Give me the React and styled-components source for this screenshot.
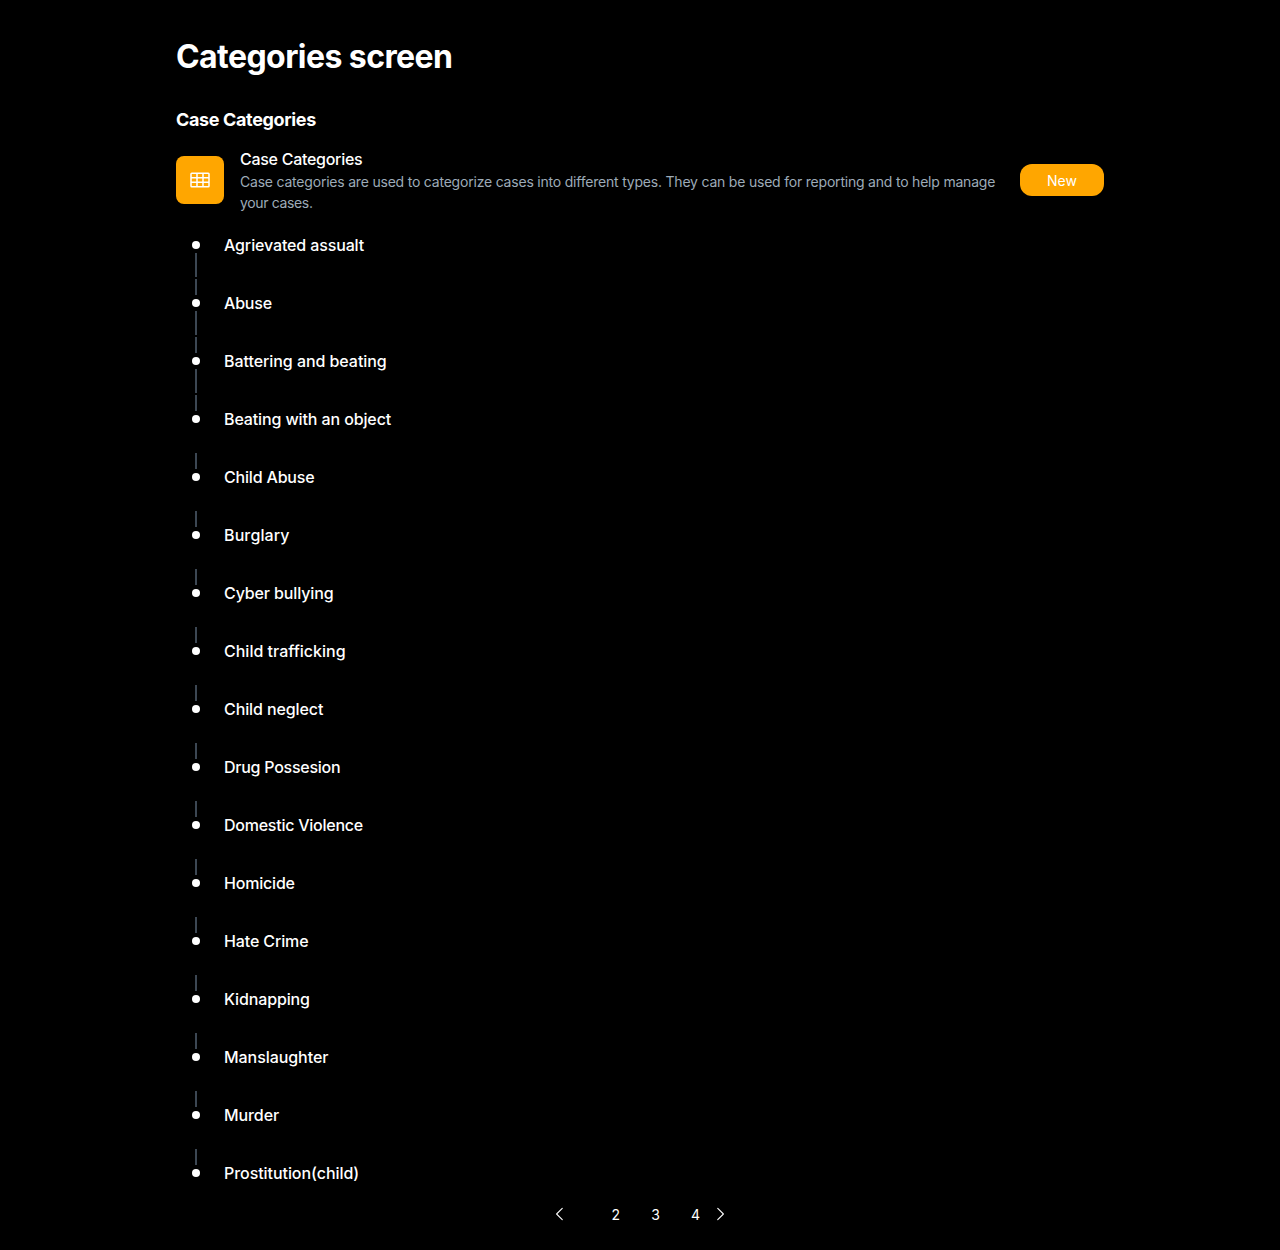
import React from "react";
import styled, { createGlobalStyle } from "styled-components";
import { PiGridNine, PiCaretLeft, PiCaretRight } from "react-icons/pi";

const GlobalStyle = createGlobalStyle`
  *, *::before, *::after { box-sizing: border-box; }
  body { margin: 0; background: #000; color: #fff; font-family: "Inter", "Liberation Sans", sans-serif; }
`;

const Page = styled.main`
  width: 960px;
  height: 1250px;
  margin: 0 auto;
  padding: 0 16px;
  background: #000;
  overflow: hidden;
`;

const Title = styled.h1`
  margin: 0;
  padding-top: 37px;
  font-size: 32px;
  line-height: 40px;
  font-weight: 700;
  letter-spacing: ${(p) => p.$track}px;
`;

const SectionTitle = styled.h2`
  margin: 31px 0 0;
  font-size: 18px;
  line-height: 23px;
  font-weight: 700;
  letter-spacing: ${(p) => p.$track}px;
`;

const Summary = styled.section`
  display: flex;
  align-items: center;
  height: 72px;
  margin-top: 13px;
`;

const IconTile = styled.div`
  display: flex;
  align-items: center;
  justify-content: center;
  flex: none;
  width: 48px;
  height: 48px;
  margin-right: 16px;
  border-radius: 8px;
  background: #ffa600;
  svg { width: 24px; height: 24px; }
`;

const Copy = styled.div`
  width: 764px;
  padding-bottom: 1px;
`;

const Name = styled.p`
  margin: 0;
  font-size: 16px;
  line-height: 24px;
  font-weight: 480;
  white-space: nowrap;
  letter-spacing: ${(p) => p.$track}px;
`;

const Description = styled.p`
  margin: 0;
  font-size: 14px;
  line-height: 21px;
  color: #9dabb8;
  white-space: nowrap;
  letter-spacing: ${(p) => p.$track}px;
`;

const NewButton = styled.button`
  width: 84px;
  height: 32px;
  margin-left: 16px;
  padding: 1px 0 0;
  border: 0;
  border-radius: 12px;
  background: #ffa600;
  color: #fff;
  font-family: inherit;
  font-size: 14px;
  font-weight: 400;
`;

const List = styled.ul`
  list-style: none;
  margin: 0;
  padding: 5px 0 0;
`;

const Item = styled.li`
  display: grid;
  grid-template-columns: 40px 1fr;
  column-gap: 8px;
  height: 58px;
`;

const Rail = styled.div`
  display: flex;
  flex-direction: column;
  align-items: center;
`;

const Stem = styled.span`
  width: 2px;
  height: 16px;
  background: ${(p) => (p.$hidden ? "transparent" : "#3c4753")};
`;

const Dot = styled.span`
  width: 8px;
  height: 8px;
  margin: 4px 0;
  border-radius: 50%;
  background: #fff;
`;

const Tail = styled.span`
  width: 2px;
  height: 24px;
  background: #3c4753;
`;

const Label = styled(Name)`
  padding-top: 12px;
`;

const Pager = styled.nav`
  display: flex;
  justify-content: center;
  align-items: center;
  gap: 11px;
  height: 40px;
  margin-top: -13px;
`;

const Pages = styled.div`
  display: flex;
`;

const PageNumber = styled.span`
  width: 40px;
  text-align: right;
  font-size: 14px;
  line-height: 21px;
`;

const Arrow = styled.span`
  display: flex;
  svg { width: 18px; height: 18px; }
`;

const categories = [
  ["Agrievated assualt", -0.13],
  ["Abuse", -0.2],
  ["Battering and beating", -0.06],
  ["Beating with an object", -0.12],
  ["Child Abuse", -0.18],
  ["Burglary", 0.12],
  ["Cyber bullying", -0.12],
  ["Child trafficking", 0],
  ["Child neglect", -0.1],
  ["Drug Possesion", -0.26],
  ["Domestic Violence", -0.25],
  ["Homicide", -0.2],
  ["Hate Crime", -0.13],
  ["Kidnapping", -0.14],
  ["Manslaughter", -0.06],
  ["Murder", -0.08],
  ["Prostitution(child)", -0.06],
];

export default function App() {
  return (
    <>
      <GlobalStyle />
      <Page>
        <Title $track={-0.57}>Categories screen</Title>
        <SectionTitle $track={-0.36}>Case Categories</SectionTitle>
        <Summary>
          <IconTile><PiGridNine /></IconTile>
          <Copy>
            <Name $track={-0.28}>Case Categories</Name>
            <Description $track={-0.207}>
              Case categories are used to categorize cases into different types. They can be used for reporting and to help manage
            </Description>
            <Description $track={-0.35}>your cases.</Description>
          </Copy>
          <NewButton>New</NewButton>
        </Summary>
        <List>
          {categories.map(([name, track], i) => (
            <Item key={name}>
              <Rail>
                <Stem $hidden={i === 0} />
                <Dot />
                {i < 3 && <Tail />}
              </Rail>
              <Label $track={track}>{name}</Label>
            </Item>
          ))}
        </List>
        <Pager>
          <Arrow><PiCaretLeft /></Arrow>
          <Pages>
            <PageNumber>2</PageNumber>
            <PageNumber>3</PageNumber>
            <PageNumber>4</PageNumber>
          </Pages>
          <Arrow><PiCaretRight /></Arrow>
        </Pager>
      </Page>
    </>
  );
}
